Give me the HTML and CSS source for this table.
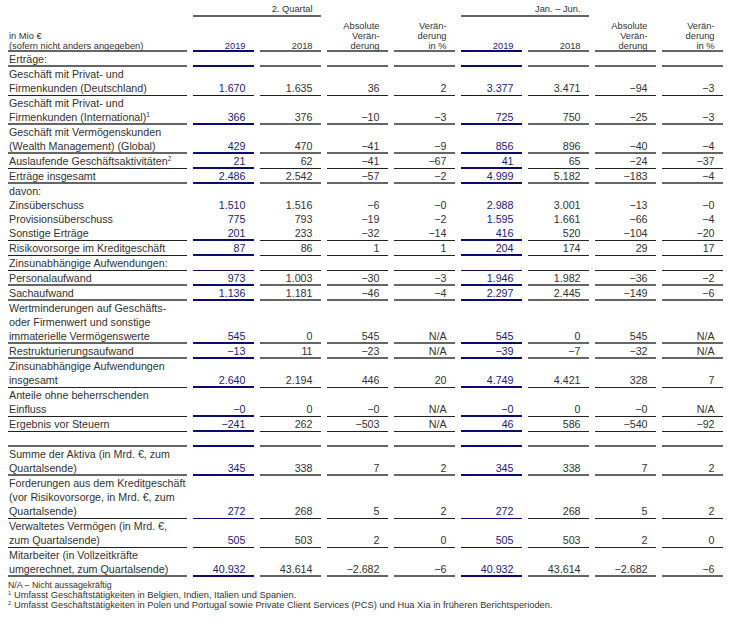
FILE: index.html
```html
<!DOCTYPE html>
<html lang="de">
<head>
<meta charset="utf-8">
<title>Segmentergebnisse</title>
<link rel="stylesheet" href="styles.css">
</head>
<body>
<div class="page">
<table class="fin">
<colgroup><col class="c-label"><col class="c-num" span="8"></colgroup>
<thead>
<tr class="r-period"><td></td><td colspan="2" class="per">2. Quartal</td><td></td><td></td><td colspan="2" class="per">Jan. – Jun.</td><td></td><td></td></tr>
<tr class="r-head tk"><td class="lbl">in Mio €<br>(sofern nicht anders angegeben)</td><td class="b">2019</td><td>2018</td><td>Absolute<br>Verän-<br>derung</td><td>Verän-<br>derung<br>in %</td><td class="b">2019</td><td>2018</td><td>Absolute<br>Verän-<br>derung</td><td>Verän-<br>derung<br>in %</td></tr>
</thead>
<tbody>
<tr class="tk"><td class="lbl">Erträge:</td><td class="b"></td><td></td><td></td><td></td><td class="b"></td><td></td><td></td><td></td></tr>
<tr class="tn"><td class="lbl">Geschäft mit Privat- und<br>Firmenkunden (Deutschland)</td><td class="b">1.670</td><td>1.635</td><td>36</td><td>2</td><td class="b">3.377</td><td>3.471</td><td>−94</td><td>−3</td></tr>
<tr class="tk"><td class="lbl">Geschäft mit Privat- und<br>Firmenkunden (International)<sup>1</sup></td><td class="b">366</td><td>376</td><td>−10</td><td>−3</td><td class="b">725</td><td>750</td><td>−25</td><td>−3</td></tr>
<tr class="tk"><td class="lbl">Geschäft mit Vermögenskunden<br>(Wealth Management) (Global)</td><td class="b">429</td><td>470</td><td>−41</td><td>−9</td><td class="b">856</td><td>896</td><td>−40</td><td>−4</td></tr>
<tr class="tn bk"><td class="lbl">Auslaufende Geschäftsaktivitäten<sup>2</sup></td><td class="b">21</td><td>62</td><td>−41</td><td>−67</td><td class="b">41</td><td>65</td><td>−24</td><td>−37</td></tr>
<tr class="tk"><td class="lbl">Erträge insgesamt</td><td class="b">2.486</td><td>2.542</td><td>−57</td><td>−2</td><td class="b">4.999</td><td>5.182</td><td>−183</td><td>−4</td></tr>
<tr class="nb"><td class="lbl">davon:</td><td class="b"></td><td></td><td></td><td></td><td class="b"></td><td></td><td></td><td></td></tr>
<tr class="nb"><td class="lbl">Zinsüberschuss</td><td class="b">1.510</td><td>1.516</td><td>−6</td><td>−0</td><td class="b">2.988</td><td>3.001</td><td>−13</td><td>−0</td></tr>
<tr class="nb"><td class="lbl">Provisionsüberschuss</td><td class="b">775</td><td>793</td><td>−19</td><td>−2</td><td class="b">1.595</td><td>1.661</td><td>−66</td><td>−4</td></tr>
<tr class="tn bk"><td class="lbl">Sonstige Erträge</td><td class="b">201</td><td>233</td><td>−32</td><td>−14</td><td class="b">416</td><td>520</td><td>−104</td><td>−20</td></tr>
<tr class="tn bk"><td class="lbl">Risikovorsorge im Kreditgeschäft</td><td class="b">87</td><td>86</td><td>1</td><td>1</td><td class="b">204</td><td>174</td><td>29</td><td>17</td></tr>
<tr class="tn"><td class="lbl">Zinsunabhängige Aufwendungen:</td><td class="b"></td><td></td><td></td><td></td><td class="b"></td><td></td><td></td><td></td></tr>
<tr class="tk"><td class="lbl">Personalaufwand</td><td class="b">973</td><td>1.003</td><td>−30</td><td>−3</td><td class="b">1.946</td><td>1.982</td><td>−36</td><td>−2</td></tr>
<tr class="tk"><td class="lbl">Sachaufwand</td><td class="b">1.136</td><td>1.181</td><td>−46</td><td>−4</td><td class="b">2.297</td><td>2.445</td><td>−149</td><td>−6</td></tr>
<tr class="tk"><td class="lbl">Wertminderungen auf Geschäfts-<br>oder Firmenwert und sonstige<br>immaterielle Vermögenswerte</td><td class="b">545</td><td>0</td><td>545</td><td>N/A</td><td class="b">545</td><td>0</td><td>545</td><td>N/A</td></tr>
<tr class="tk"><td class="lbl">Restrukturierungsaufwand</td><td class="b">−13</td><td>11</td><td>−23</td><td>N/A</td><td class="b">−39</td><td>−7</td><td>−32</td><td>N/A</td></tr>
<tr class="tn bk"><td class="lbl">Zinsunabhängige Aufwendungen<br>insgesamt</td><td class="b">2.640</td><td>2.194</td><td>446</td><td>20</td><td class="b">4.749</td><td>4.421</td><td>328</td><td>7</td></tr>
<tr class="tn bk"><td class="lbl">Anteile ohne beherrschenden<br>Einfluss</td><td class="b">−0</td><td>0</td><td>−0</td><td>N/A</td><td class="b">−0</td><td>0</td><td>−0</td><td>N/A</td></tr>
<tr class="tn bk"><td class="lbl">Ergebnis vor Steuern</td><td class="b">−241</td><td>262</td><td>−503</td><td>N/A</td><td class="b">46</td><td>586</td><td>−540</td><td>−92</td></tr>
<tr class="tk"><td class="lbl"></td><td class="b"></td><td></td><td></td><td></td><td class="b"></td><td></td><td></td><td></td></tr>
<tr class="tk"><td class="lbl">Summe der Aktiva (in Mrd. €, zum<br>Quartalsende)</td><td class="b">345</td><td>338</td><td>7</td><td>2</td><td class="b">345</td><td>338</td><td>7</td><td>2</td></tr>
<tr class="tn"><td class="lbl">Forderungen aus dem Kreditgeschäft<br>(vor Risikovorsorge, in Mrd. €, zum<br>Quartalsende)</td><td class="b">272</td><td>268</td><td>5</td><td>2</td><td class="b">272</td><td>268</td><td>5</td><td>2</td></tr>
<tr class="tn"><td class="lbl">Verwaltetes Vermögen (in Mrd. €,<br>zum Quartalsende)</td><td class="b">505</td><td>503</td><td>2</td><td>0</td><td class="b">505</td><td>503</td><td>2</td><td>0</td></tr>
<tr class="tk"><td class="lbl">Mitarbeiter (in Vollzeitkräfte<br>umgerechnet, zum Quartalsende)</td><td class="b">40.932</td><td>43.614</td><td>−2.682</td><td>−6</td><td class="b">40.932</td><td>43.614</td><td>−2.682</td><td>−6</td></tr>
</tbody>
</table>
<div class="notes">
<p class="na">N/A – Nicht aussagekräftig</p>
<p class="fn"><sup>1</sup>Umfasst Geschäftstätigkeiten in Belgien, Indien, Italien und Spanien.</p>
<p class="fn"><sup>2</sup>Umfasst Geschäftstätigkeiten in Polen und Portugal sowie Private Client Services (PCS) und Hua Xia in früheren Berichtsperioden.</p>
</div>
</div>
</body>
</html>
```
FILE: styles.css
```css
html, body {
  margin: 0;
  background: #ffffff;
}
body {
  font-family: "Liberation Sans", Arial, sans-serif;
  color: #333333;
}
.page {
  padding: 4px 0 0 2px;
}
.fin {
  border-collapse: separate;
  border-spacing: 6px 0;
  table-layout: fixed;
  width: 721px;
}
.c-label { width: 179px; }
.c-num { width: 61px; }

.fin td {
  padding: 0 8.5px 0 0;
  text-align: right;
  vertical-align: bottom;
  font-size: 10.7px;
  line-height: 14px;
  white-space: nowrap;
  border-bottom: 1px solid transparent;
}
.fin td.lbl {
  text-align: left;
  padding: 0 0 0 1px;
}
.fin td.b {
  color: #1b1b7c;
}
.fin sup {
  font-size: 6.5px;
  line-height: 0;
  vertical-align: 4px;
}

/* period row */
.r-period td {
  font-size: 9.3px;
  line-height: 11px;
  padding-bottom: 1px;
  border-bottom: 0;
}
.r-period td.per {
  border-bottom: 1px solid #666666;
  box-shadow: inset 0 -1px #666666;
}

/* column header row */
.r-head { height: 35px; }
.fin .r-head td {
  font-size: 9.3px;
  line-height: 10px;
}

tbody tr { height: 15px; }

tr.tk td {
  border-bottom-color: #666666;
  box-shadow: inset 0 -1px #666666;
}
tr.tn td {
  border-bottom-color: #222222;
}
tr.tn td.b {
  border-bottom-color: #0c0c6c;
}
tr.tk td.b,
tr.bk td.b {
  border-bottom-color: #0c0c6c;
  box-shadow: inset 0 -1px #0c0c6c;
}
tbody tr.nb { height: 14px; }
.fin tr.nb td {
  border-bottom: 0;
  line-height: 14px;
}

/* notes */
.notes {
  margin: 3px 0 0 6px;
}
.notes p {
  margin: 0;
}
.notes .na {
  font-size: 8.8px;
  line-height: 10px;
}
.notes .fn {
  font-size: 9.3px;
  line-height: 10px;
}
.notes .fn sup {
  font-size: 5.5px;
  line-height: 0;
  vertical-align: 3px;
  margin-right: 3px;
}
```
